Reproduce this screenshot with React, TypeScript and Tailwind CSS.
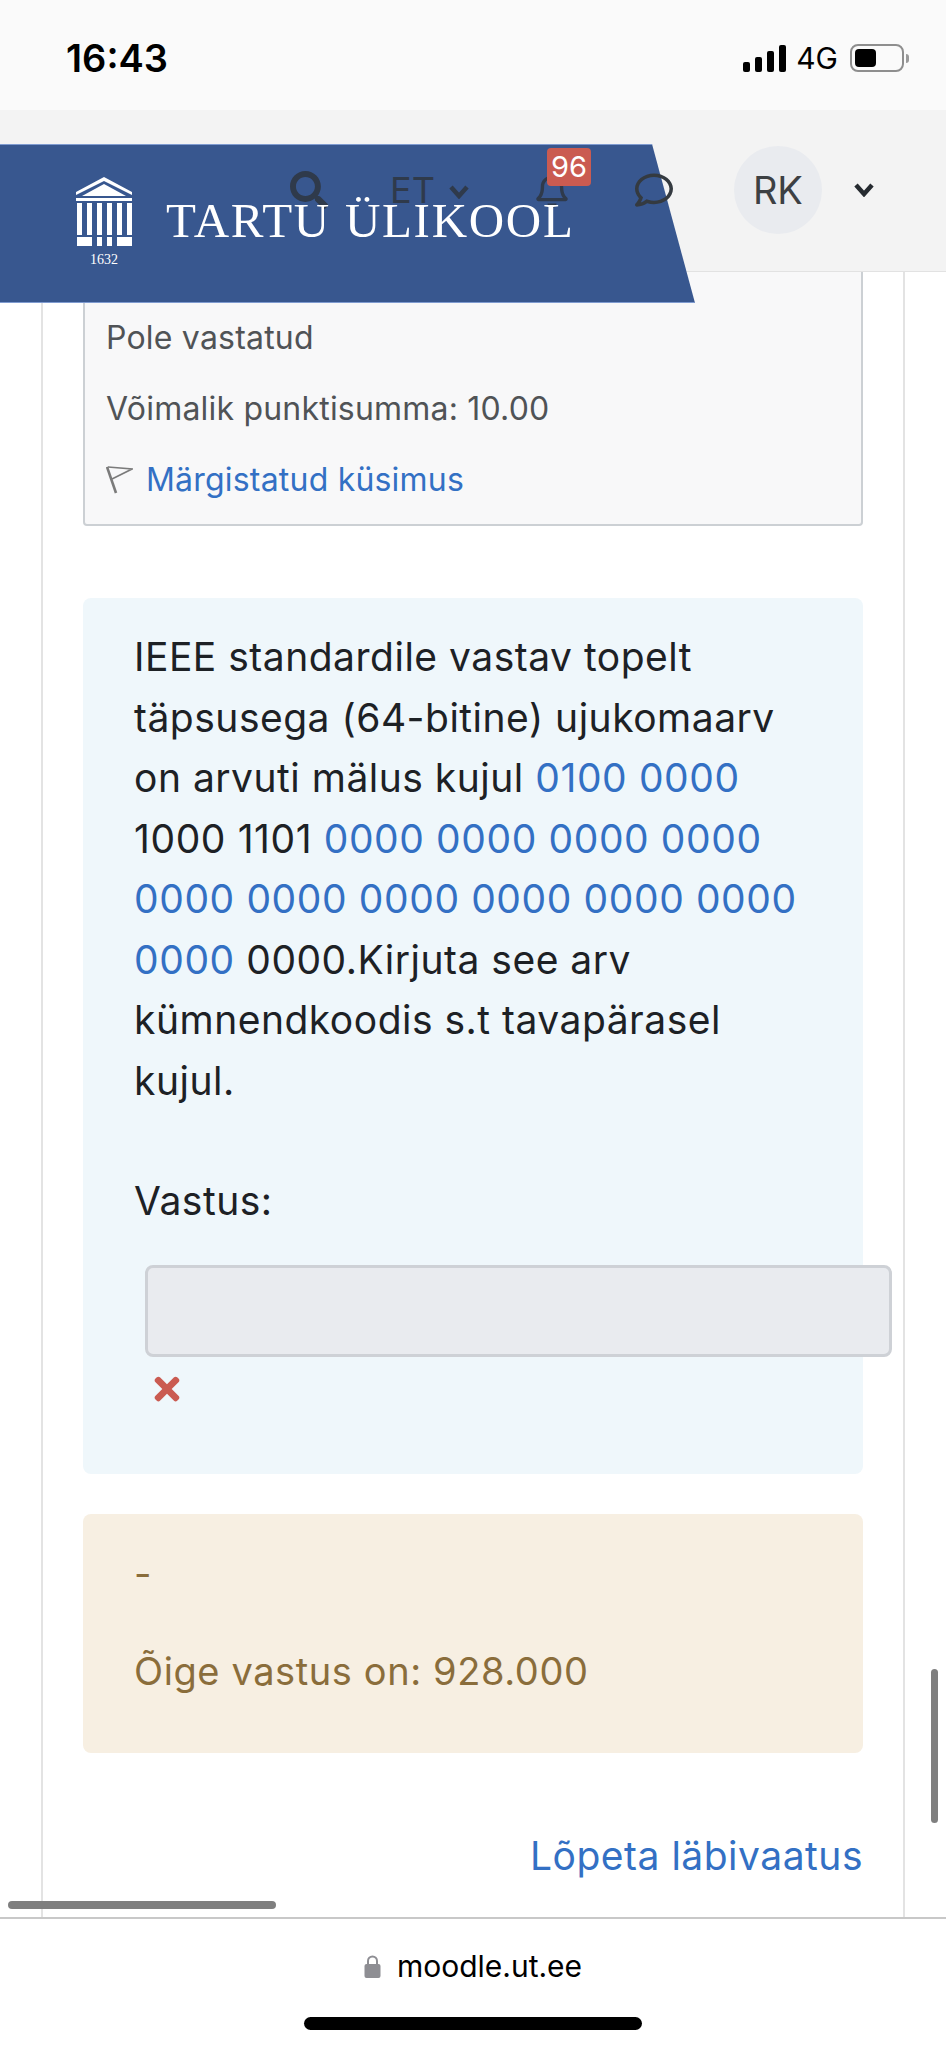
import { FaRegBell, FaRegComment, FaSearch, FaTimes } from 'react-icons/fa';

const Temple = () => (
    <svg width="56" height="69" viewBox="0 0 56 69" fill="#fff">
        <path d="M28 0 L56 15 L56 18 L28 4 L0 18 L0 15 Z" />
        <path d="M28 7 L50 19 L6 19 Z" />
        <rect x="0" y="21" width="56" height="3" />
        <rect x="1" y="26" width="5" height="32" />
        <rect x="11" y="26" width="5" height="32" />
        <rect x="21" y="26" width="5" height="32" />
        <rect x="31" y="26" width="5" height="32" />
        <rect x="41" y="26" width="5" height="32" />
        <rect x="51" y="26" width="5" height="32" />
        <rect x="1" y="60" width="15" height="9" />
        <rect x="21" y="60" width="5" height="9" />
        <rect x="31" y="60" width="5" height="9" />
        <rect x="41" y="60" width="15" height="9" />
    </svg>
);

const Chevron = ({ className }: { className: string }) => (
    <svg className={className} viewBox="0 0 20 14" fill="none" stroke="currentColor" strokeWidth="4.5">
        <path d="M2 2 L10 11 L18 2" />
    </svg>
);

const Signal = () => (
    <svg width="44" height="27" viewBox="0 0 44 27" fill="#000">
        <rect x="0" y="17" width="7" height="10" rx="2" />
        <rect x="12" y="12" width="7" height="15" rx="2" />
        <rect x="24" y="6" width="7" height="21" rx="2" />
        <rect x="36" y="0" width="7" height="27" rx="2" />
    </svg>
);

const Battery = () => (
    <div className="flex items-center gap-[2px]">
        <div className="w-[54px] h-[28px] rounded-[8px] border-[2px] border-[#8e8e8e] p-[3px]">
            <div className="w-[21px] h-full rounded-[4px] bg-black" />
        </div>
        <div className="w-[3px] h-[9px] rounded-r-full bg-[#9a9a9a]" />
    </div>
);

const Flag = () => (
    <svg width="27" height="28" viewBox="0 0 27 28" fill="none" stroke="#7b7b7b" strokeWidth="1.6">
        <path d="M1 1 L10 27" strokeWidth="2.6" />
        <path d="M2 1 L26 3 L6 13" />
    </svg>
);

const Lock = () => (
    <svg width="17" height="24" viewBox="0 0 17 24">
        <path d="M4 11 V7 a4.5 4.5 0 0 1 9 0 V11" fill="none" stroke="#8e8e93" strokeWidth="2" />
        <rect x="0.5" y="10" width="16" height="14" rx="2" fill="#8e8e93" />
    </svg>
);

const NavBar = () => (
    <header className="relative z-10 h-[162px] shrink-0 bg-[#f3f3f3] border-b border-[#e2e2e2]">
        <div className="absolute left-0 top-[34px] w-[695px] h-[159px] bg-[#38578f] border-y border-[#7f9bd0] [clip-path:polygon(0_0,652px_0,695px_100%,0_100%)]" />

        <div className="relative flex items-center h-[160px] text-[#2f3a4b]">
            <FaSearch className="ml-[290px] w-[38px] h-[38px]" />
            <span className="ml-[62px] text-[36px] leading-none">ET</span>
            <Chevron className="ml-[14px] mt-[4px] w-[20px] h-[14px]" />
            <div className="relative ml-[65px]">
                <FaRegBell className="w-[36px] h-[36px]" />
                <span className="absolute left-[13px] -top-[24px] w-[44px] h-[38px] rounded-[4px] bg-[#ca5b51] text-white text-[29px] leading-[38px] text-center">
                    96
                </span>
            </div>
            <FaRegComment className="ml-[64px] w-[40px] h-[38px] text-[#343a40]" />
            <div className="ml-[60px] w-[88px] h-[88px] rounded-full bg-[#e9ebef] flex items-center justify-center text-[38px] text-[#3d4043]">
                RK
            </div>
            <Chevron className="ml-[32px] w-[20px] h-[14px] text-[#262b30]" />
        </div>

        <div className="absolute left-[76px] top-[67px] flex gap-[34px] text-white">
            <div className="flex flex-col items-center">
                <Temple />
                <span className="text-[14px] leading-none mt-[7px] font-['Liberation_Serif',serif]">1632</span>
            </div>
            <span className="mt-[12px] text-[49px] leading-[64px] whitespace-nowrap font-['Liberation_Serif',serif] tracking-[1.7px]">
                TARTU ÜLIKOOL
            </span>
        </div>
    </header>
);

export default function App() {
    return (
        <div className="w-[946px] h-[2048px] flex flex-col overflow-hidden bg-white font-['Inter',sans-serif]">
            <div className="h-[110px] shrink-0 bg-[#fafafa] flex items-center justify-between pl-[66px] pr-[37px] pt-[6px]">
                <span className="text-[38px] font-semibold text-black leading-none">16:43</span>
                <div className="flex items-center">
                    <Signal />
                    <span className="ml-[9px] mr-[12px] text-[30px] text-black leading-none">4G</span>
                    <Battery />
                </div>
            </div>

            <NavBar />

            <main className="relative flex-1 min-h-0 mx-[41px] border-x-2 border-[#e3e3e3] px-[40px]">
                <section className="-mt-[20px] h-[274px] pt-[64px] pl-[21px] pr-[22px] bg-[#f8f8f9] border-2 border-[#ccd0d4] rounded-[4px] text-[32px] leading-[40px] tracking-[0.2px] text-[#505356]">
                    <p>Pole vastatud</p>
                    <p className="mt-[31px]">Võimalik punktisumma: 10.00</p>
                    <div className="mt-[31px] flex items-center gap-[13px]">
                        <Flag />
                        <a className="text-[#3370c4]">Märgistatud küsimus</a>
                    </div>
                </section>

                <section className="mt-[72px] h-[876px] pt-[29px] pl-[51px] bg-[#eff7fb] rounded-[8px] text-[39px] leading-[60.5px] tracking-[0.5px] text-[#1d2125]">
                    <p>
                        IEEE standardile vastav topelt
                        <br />
                        täpsusega (64-bitine) ujukomaarv
                        <br />
                        on arvuti mälus kujul <span className="text-[#3370c4] tracking-[0.6px]">0100 0000</span>
                        <br />
                        <span className="tracking-[0.6px]">1000 1101</span>{' '}
                        <span className="text-[#3370c4] tracking-[0.6px]">0000 0000 0000 0000</span>
                        <br />
                        <span className="text-[#3370c4] tracking-[0.6px]">0000 0000 0000 0000 0000 0000</span>
                        <br />
                        <span className="text-[#3370c4] tracking-[0.6px]">0000</span> 0000.Kirjuta see arv
                        <br />
                        kümnendkoodis s.t tavapärasel
                        <br />
                        kujul.
                    </p>
                    <p className="mt-[60px]">Vastus:</p>
                    <div className="mt-[33px] ml-[11px] w-[747px] h-[92px] bg-[#e9ebef] border-[3px] border-[#ced1d6] rounded-[8px]" />
                    <FaTimes className="ml-[15px] mt-[14px] w-[36px] h-[36px] text-[#ca5b51]" />
                </section>

                <section className="mt-[40px] h-[239px] pt-[29px] pl-[51px] bg-[#f7efe2] rounded-[8px] text-[38px] leading-[60px] tracking-[0.6px] text-[#8a6d3b]">
                    <p>-</p>
                    <p className="mt-[38px]">Õige vastus on: 928.000</p>
                </section>

                <div className="mt-[73px] text-right text-[39px] leading-[60px] tracking-[0.5px] text-[#3370c4]">
                    <a>Lõpeta läbivaatus</a>
                </div>
            </main>

            <footer className="relative h-[131px] shrink-0 bg-white border-t-2 border-[#c8c8c8] flex flex-col items-center">
                <div className="absolute left-[8px] -top-[18px] w-[268px] h-[8px] rounded-full bg-[#7f7f7f]" />
                <div className="absolute right-[8px] -top-[250px] w-[7px] h-[154px] rounded-full bg-[#7f7f7f]" />
                <div className="flex items-center gap-[16px] mt-[29px]">
                    <Lock />
                    <span className="text-[30px] leading-[36px] text-black">moodle.ut.ee</span>
                </div>
                <div className="mt-[33px] w-[338px] h-[13px] rounded-full bg-black" />
            </footer>
        </div>
    );
}
